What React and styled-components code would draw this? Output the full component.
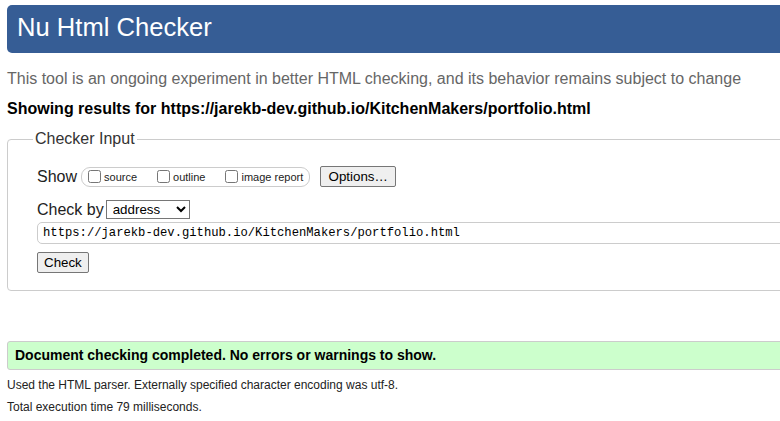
import styled, { createGlobalStyle } from "styled-components";

const GlobalStyle = createGlobalStyle`
  html, body {
    margin: 0;
    padding: 0;
    overflow: hidden;
    background: #fff;
  }
  body {
    font-family: "Liberation Sans", Arial, sans-serif;
    color: #000;
  }
`;

const options = ["source", "outline", "image report"];

const App = () => {
  return (
    <>
      <GlobalStyle />
      <Page>
        <Header>Nu Html Checker</Header>
        <Intro>
          This tool is an ongoing experiment in better HTML checking, and its
          behavior remains subject to change
        </Intro>
        <ResultsFor>
          Showing results for https://jarekb-dev.github.io/KitchenMakers/portfolio.html
        </ResultsFor>

        <Fieldset>
          <Legend>Checker Input</Legend>
          <Row $top={18} $height={21}>
            <RowLabel $gap={4}>Show</RowLabel>
            <ShowGroup>
              {options.map((name, i) => (
                <OptionLabel key={name} $last={i === options.length - 1}>
                  <input type="checkbox" />
                  {name}
                </OptionLabel>
              ))}
            </ShowGroup>
            <OptionsButton type="button">Options…</OptionsButton>
          </Row>
          <Row $top={13} $height={19}>
            <RowLabel $gap={2}>Check by</RowLabel>
            <Select defaultValue="address">
              <option value="address">address</option>
              <option value="file">file upload</option>
              <option value="text">text input</option>
            </Select>
          </Row>
          <UrlInput
            type="url"
            defaultValue="https://jarekb-dev.github.io/KitchenMakers/portfolio.html"
          />
          <CheckRow>
            <Button type="button">Check</Button>
          </CheckRow>
        </Fieldset>

        <Success>
          Document checking completed. No errors or warnings to show.
        </Success>
        <Details>
          <DetailLine>
            Used the HTML parser. Externally specified character encoding was
            utf-8.
          </DetailLine>
          <DetailLine>Total execution time 79 milliseconds.</DetailLine>
        </Details>
      </Page>
    </>
  );
};

const Page = styled.div`
  width: 840px;
  padding: 5px 0 0 7px;
`;

const Header = styled.h1`
  margin: 0;
  height: 48px;
  line-height: 44px;
  padding-left: 10px;
  background: #365d95;
  color: #fff;
  font-size: 25.6px;
  font-weight: normal;
  border-radius: 5px;
`;

const Intro = styled.p`
  margin: 17px 0 0;
  font-size: 16px;
  line-height: 18px;
  color: #666;
  white-space: nowrap;
`;

const ResultsFor = styled.p`
  margin: 12px 0 0;
  font-size: 16px;
  line-height: 18px;
  font-weight: bold;
  white-space: nowrap;
`;

const Fieldset = styled.fieldset`
  margin: 12px 0 0;
  padding: 0 0 17px 29px;
  border: 1px solid #ccc;
  border-radius: 4px;
  min-width: 0;
`;

const Legend = styled.legend`
  margin-left: -4px;
  padding: 0 2px;
  font-size: 16px;
  line-height: 18px;
  color: #333;
`;

const Row = styled.div`
  display: flex;
  align-items: center;
  margin-top: ${(p) => p.$top}px;
  height: ${(p) => p.$height}px;
`;

const RowLabel = styled.span`
  font-size: 16px;
  line-height: 18px;
  color: #222;
  margin-right: ${(p) => p.$gap}px;
`;

const ShowGroup = styled.div`
  display: inline-flex;
  align-items: center;
  box-sizing: border-box;
  width: 229px;
  height: 20px;
  padding: 0 0 0 2px;
  border: 1px solid #ccc;
  border-radius: 9px;
`;

const OptionLabel = styled.label`
  display: inline-flex;
  align-items: center;
  font-size: 11px;
  color: #222;
  margin-right: ${(p) => (p.$last ? 0 : 16)}px;

  input {
    width: 13px;
    height: 13px;
    margin: 0 3px 0 4px;
  }
`;

const Button = styled.button`
  box-sizing: border-box;
  height: 21px;
  padding: 1px 6px;
  font-family: "Liberation Sans", Arial, sans-serif;
  font-size: 13.33px;
  color: #000;
  background: #efefef;
  border: 1px solid #767676;
  border-radius: 2px;
`;

const OptionsButton = styled(Button)`
  margin-left: 10px;
  padding: 1px 7.5px;
`;

const Select = styled.select`
  box-sizing: border-box;
  width: 84px;
  height: 19px;
  padding: 0 2px;
  font-family: "Liberation Sans", Arial, sans-serif;
  font-size: 13.33px;
  color: #000;
  background: #fff;
  border: 1px solid #767676;
  border-radius: 0;
`;

const UrlInput = styled.input`
  display: block;
  box-sizing: border-box;
  margin-top: 3px;
  width: 800px;
  height: 22px;
  padding: 0 5px;
  font-family: "Liberation Mono", "DejaVu Sans Mono", monospace;
  font-size: 12.2px;
  color: #000;
  border: 1px solid #ccc;
  border-radius: 5px;
  outline: none;
`;

const CheckRow = styled.div`
  margin-top: 8px;
  display: flex;
`;

const Success = styled.div`
  margin-top: 50px;
  box-sizing: border-box;
  height: 29px;
  line-height: 27px;
  padding-left: 7px;
  background: #ccffcc;
  border: 1px solid #ccc;
  border-radius: 3px;
  font-size: 14px;
  font-weight: bold;
  white-space: nowrap;
`;

const Details = styled.div`
  margin-top: 4px;
`;

const DetailLine = styled.p`
  margin: 0;
  font-size: 12px;
  line-height: 22px;
  color: #222;
  white-space: nowrap;
`;

export default App;
